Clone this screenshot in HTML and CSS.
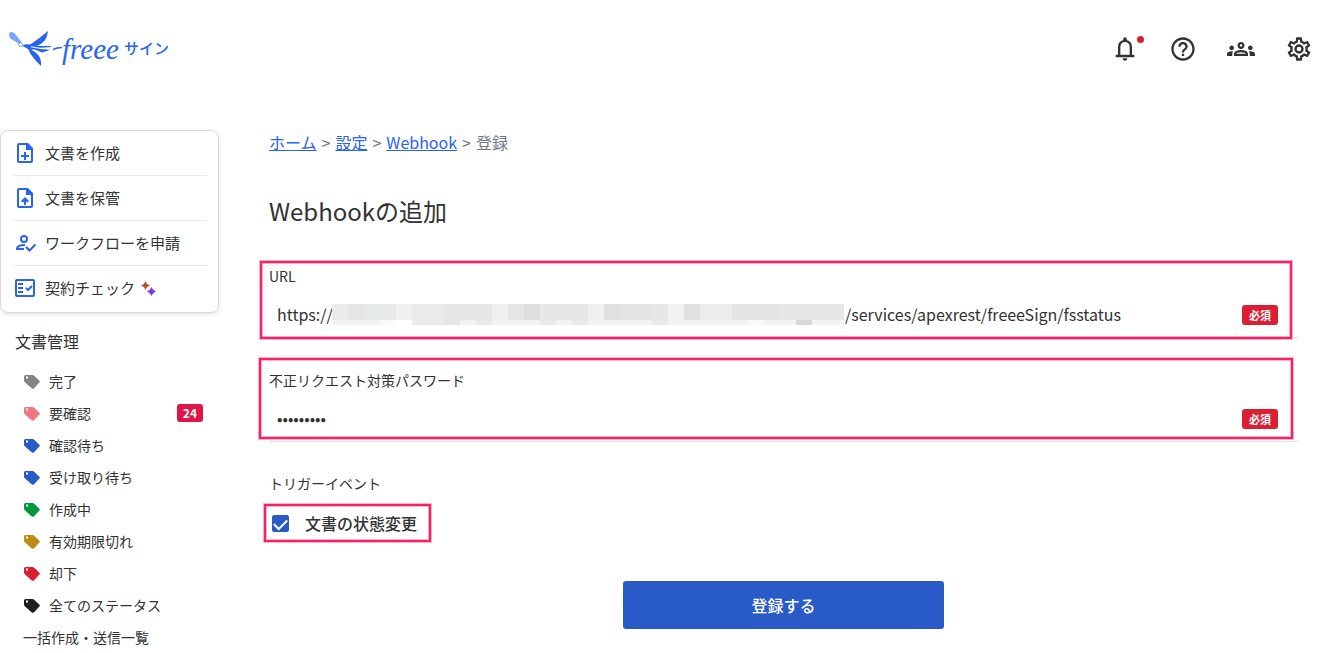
FILE: index.html
```html
<!DOCTYPE html>
<html lang="ja">
<head>
<meta charset="utf-8">
<meta name="viewport" content="width=device-width, initial-scale=1">
<title>Webhookの追加</title>
<link rel="stylesheet" href="styles.css">
</head>
<body>
<svg class="sprite" aria-hidden="true">
  <symbol id="tag" viewBox="0 0 16 14"><path fill-rule="evenodd" d="M1.500 0H8.500Q9.300 0 9.900.5L15.400 5.700Q16.300 6.600 15.400 7.600L9.800 13.400Q8.800 14.300 7.800 13.400L.8 7.200Q0 6.500 0 5.500V1.500Q0 0 1.500 0ZM2 1.500V3.500H4V1.500Z"/></symbol>
</svg>
<header class="header">
  <a class="logo" href="#" aria-label="freee サイン">
    <svg class="bird" width="54" height="36" viewBox="0 0 54 36" aria-hidden="true">
      <path fill="#78a8fb" d="M1 3.500Q1 1 3.500 1Q6 1 8 4L13.500 11L11.500 13L3 8Q1 6 1 3.500Z"/>
      <circle cx="12.500" cy="13.500" r="2" fill="none" stroke="#78a8fb"/>
      <path fill="#2864f0" d="M14 14.500Q18 12.500 22 13.500C29 9 34 5 40 0C39 8 36 12 29 15L43 15V16L30 17L42 19L34 21.500L27 18.500L23 18.500C30 22 34 27 33 35C28 30 23 25 20 18Z"/>
      <path fill="none" stroke="#fff" d="M23 15.800L36 18"/>
      <path fill="none" stroke="#2864f0" stroke-width="1.500" d="M45 18.500Q49 16.500 54 16.500"/>
    </svg>
    <span class="brand">freee</span><span class="product">サイン</span>
  </a>
  <nav class="tools" aria-label="ツール">
    <button class="tool" type="button" aria-label="お知らせ">
      <svg width="28" height="28" viewBox="0 0 24 24"><path fill="currentColor" d="M4 19v-2h2v-7q0-2.080 1.250-3.690T10.500 4.200v-.7q0-.63.440-1.060T12 2t1.060.44T13.500 3.500v.7q2 .5 3.250 2.110T18 10v7h2v2H4Zm8 3q-.83 0-1.410-.59T10 20h4q0 .82-.590 1.410T12 22Zm-4-5h8v-7q0-1.650-1.180-2.830T12 6 9.180 7.170 8 10v7Z"/></svg>
      <span class="dot"></span>
    </button>
    <button class="tool" type="button" aria-label="ヘルプ">
      <svg width="28" height="28" viewBox="0 0 24 24"><path fill="currentColor" d="M11 18h2v-2h-2v2Zm1-16C6.480 2 2 6.480 2 12s4.480 10 10 10 10-4.480 10-10S17.520 2 12 2Zm0 18c-4.410 0-8-3.590-8-8s3.590-8 8-8 8 3.590 8 8-3.590 8-8 8Zm0-14c-2.210 0-4 1.790-4 4h2c0-1.100.9-2 2-2s2 .9 2 2c0 2-3 1.750-3 5h2c0-2.250 3-2.500 3-5 0-2.210-1.790-4-4-4Z"/></svg>
    </button>
    <button class="tool" type="button" aria-label="メンバー">
      <svg width="28" height="28" viewBox="0 0 24 24"><path fill="currentColor" d="M4 13c1.100 0 2-.9 2-2s-.9-2-2-2-2 .9-2 2 .9 2 2 2Zm1.130 1.100C4.760 14.040 4.390 14 4 14c-.99 0-1.930.21-2.780.58C.48 14.900 0 15.620 0 16.430V18h4.500v-1.610c0-.83.230-1.610.630-2.290ZM20 13c1.100 0 2-.9 2-2s-.9-2-2-2-2 .9-2 2 .9 2 2 2Zm4 3.430c0-.81-.48-1.530-1.220-1.850A6.950 6.950 0 0 0 20 14c-.39 0-.76.040-1.130.1.400.68.630 1.460.630 2.290V18H24v-1.570Zm-7.760-2.780A10.500 10.500 0 0 0 12 12.750c-1.630 0-3.070.390-4.240.9A2.990 2.990 0 0 0 6 16.390V18h12v-1.610c0-1.180-.68-2.260-1.760-2.740ZM8.070 16c.09-.23.130-.39.910-.69.970-.38 1.990-.56 3.020-.56s2.050.18 3.020.56c.77.3.81.460.910.690H8.070ZM12 8c.55 0 1 .45 1 1s-.45 1-1 1-1-.45-1-1 .45-1 1-1Zm0-2c-1.660 0-3 1.340-3 3s1.340 3 3 3 3-1.340 3-3-1.340-3-3-3Z"/></svg>
    </button>
    <button class="tool" type="button" aria-label="設定">
      <svg width="28" height="28" viewBox="0 0 24 24"><path fill="currentColor" d="M19.430 12.980c.04-.32.070-.64.070-.98s-.03-.66-.07-.98l2.110-1.650c.19-.15.240-.42.120-.64l-2-3.460a.5.500 0 0 0-.61-.22l-2.490 1c-.52-.4-1.080-.73-1.690-.98l-.38-2.650A.49.490 0 0 0 14 2h-4a.49.490 0 0 0-.49.420l-.38 2.650c-.61.250-1.170.590-1.690.98l-2.490-1a.5.500 0 0 0-.61.220l-2 3.460a.49.490 0 0 0 .12.640l2.110 1.650c-.04.320-.07.650-.07.980s.03.660.07.980l-2.110 1.650a.5.500 0 0 0-.12.640l2 3.460c.12.220.390.300.610.220l2.490-1c.52.400 1.080.730 1.690.98l.38 2.650c.03.240.240.420.490.420h4c.25 0 .46-.18.490-.42l.38-2.650c.61-.25 1.170-.59 1.690-.98l2.490 1c.23.090.49 0 .61-.22l2-3.460a.5.500 0 0 0-.12-.64l-2.110-1.650Zm-1.980-1.710c.04.310.050.520.050.730s-.02.430-.05.730l-.14 1.130.89.700 1.080.84-.7 1.210-1.270-.51-1.040-.42-.9.680c-.43.320-.84.560-1.250.73l-1.060.43-.16 1.130-.2 1.350h-1.400l-.35-2.480-1.060-.43c-.43-.18-.83-.41-1.230-.71l-.91-.7-1.060.43-1.270.51-.7-1.210 1.970-1.540-.14-1.130a7 7 0 0 1 0-1.480l.14-1.130-1.970-1.540.7-1.210 2.310.93.900-.68c.43-.32.840-.56 1.250-.73l1.060-.43.360-2.480h1.390l.35 2.480 1.060.43c.43.180.83.410 1.230.71l.91.700 2.330-.94.700 1.210-1.960 1.550.14 1.130ZM12 8a4 4 0 1 0 0 8 4 4 0 0 0 0-8Zm0 6a2 2 0 1 1 0-4 2 2 0 0 1 0 4Z"/></svg>
    </button>
  </nav>
</header>

<div class="layout">
  <aside class="sidebar">
    <nav class="card" aria-label="操作">
      <a class="action" href="#">
        <svg width="24" height="24" viewBox="0 0 24 24"><path fill="currentColor" fill-rule="evenodd" d="M6 2h9l5 5v13q0 2-2 2H6q-2 0-2-2V4q0-2 2-2Zm0 2v16h12V9h-5V4ZM11 11h2v3h3v2h-3v3h-2v-3H8v-2h3Z"/></svg>
        文書を作成</a>
      <a class="action" href="#">
        <svg width="24" height="24" viewBox="0 0 24 24"><path fill="currentColor" fill-rule="evenodd" d="M6 2h9l5 5v13q0 2-2 2H6q-2 0-2-2V4q0-2 2-2Zm0 2v16h12V9h-5V4ZM12 11l4 4-1.400 1.400L13 15.500v3.500h-2v-3.500l-1.600.9L8 15Z"/></svg>
        文書を保管</a>
      <a class="action" href="#">
        <svg width="24" height="24" viewBox="0 0 24 24"><g fill="none" stroke="currentColor" stroke-width="2"><circle cx="11" cy="8" r="3"/><path d="M11 18H4q0-4 8-4M13 16l3.500 3.500 6-6"/></g></svg>
        ワークフローを申請</a>
      <a class="action" href="#">
        <svg width="24" height="24" viewBox="0 0 24 24"><g fill="none" stroke="currentColor" stroke-width="2"><rect x="3" y="4" width="18" height="16" rx="1"/><path d="M5 8h5M5 12h5M5 16h5M13 12l2 2 4-4"/></g></svg>
        契約チェック
        <svg class="spark" width="15" height="15" viewBox="0 0 15 15"><path fill="#bf4a20" d="M4.500 0L6 3L9 4.500L6 6L4.500 9L3 6L0 4.500L3 3Z"/><path fill="#7a3fe0" d="M10.500 6L12.200 8.800L15 10.500L12.200 12.200L10.500 15L8.800 12.200L6 10.500L8.800 8.800Z"/></svg></a>
    </nav>
    <h2 class="side-title">文書管理</h2>
    <nav aria-label="文書管理">
      <ul class="statuses">
        <li><a class="status" href="#"><svg class="tag gray"><use href="#tag"/></svg>完了</a></li>
        <li><a class="status" href="#"><svg class="tag pink"><use href="#tag"/></svg>要確認<span class="count">24</span></a></li>
        <li><a class="status" href="#"><svg class="tag blue"><use href="#tag"/></svg>確認待ち</a></li>
        <li><a class="status" href="#"><svg class="tag blue"><use href="#tag"/></svg>受け取り待ち</a></li>
        <li><a class="status" href="#"><svg class="tag green"><use href="#tag"/></svg>作成中</a></li>
        <li><a class="status" href="#"><svg class="tag gold"><use href="#tag"/></svg>有効期限切れ</a></li>
        <li><a class="status" href="#"><svg class="tag red"><use href="#tag"/></svg>却下</a></li>
        <li><a class="status" href="#"><svg class="tag black"><use href="#tag"/></svg>全てのステータス</a></li>
        <li><a class="status" href="#">一括作成・送信一覧</a></li>
      </ul>
    </nav>
  </aside>

  <main class="main">
    <nav class="crumbs" aria-label="パンくず"><a href="#">ホーム</a><span>&gt;</span><a href="#">設定</a><span>&gt;</span><a href="#">Webhook</a><span>&gt;</span><span>登録</span></nav>
    <h1 class="title">Webhookの追加</h1>
    <form>
      <div class="field marked">
        <label class="label" for="url">URL</label>
        <div class="control">
          <input class="input scheme" id="url" type="text" value="https://">
          <svg class="mosaic" width="512" height="21" viewBox="0 0 512 21" shape-rendering="crispEdges" aria-hidden="true">
            <path fill="#e7e7e7" d="M0 0h512v16H0z"/><path fill="#f3f3f3" d="M0 16h512v5H0z"/>
            <path fill="#edebea" d="M0 0h16v16H0z"/><path fill="#e3e5e6" d="M16 0h16v16H16z"/>
            <path fill="#e6e9e9" d="M32 0h32v16H32z"/><path fill="#f0f0f0" d="M64 0h16v16H64zM160 0h16v16h-16zM256 0h16v16h-16zM320 0h16v16h-16z"/>
            <path fill="#eaeae8" d="M80 0h32v16H80z"/><path fill="#e4e7e6" d="M112 0h16v16h-16z"/>
            <path fill="#e8e5e3" d="M176 0h16v16h-16z"/><path fill="#dcdee0" d="M192 0h16v16h-16z"/>
            <path fill="#e0e0e0" d="M272 0h16v16h-16zM352 0h16v16h-16z"/><path fill="#f2f2f1" d="M336 0h16v16h-16z"/><path fill="#ebeded" d="M368 0h32v16h-32z"/>
            <path fill="#e4e4e4" d="M288 0h32v16h-32zM400 0h48v16h-48z"/><path fill="#e7e7e7" d="M320 0h16v16h-16z"/><path fill="#e7e7e4" d="M464 0h16v16h-16z"/>
            <path fill="#fff" d="M64 16h16v5H64z"/><path fill="#fafafa" d="M48 16h16v5H48zM416 16h16v5h-16z"/>
            <path fill="#ebebeb" d="M80 16h32v5H80zM144 16h16v5h-16zM208 16h16v5h-16zM240 16h16v5h-16zM320 16h16v5h-16z"/>
            <path fill="#e6e6e6" d="M112 16h16v5h-16z"/><path fill="#d9d9d9" d="M464 16h16v5h-16z"/>
          </svg>
          <input class="input" type="text" value="/services/apexrest/freeeSign/fsstatus" aria-label="URLのパス">
          <span class="required">必須</span>
        </div>
      </div>
      <div class="field marked secret">
        <label class="label" for="password">不正リクエスト対策パスワード</label>
        <div class="control">
          <input class="input" id="password" type="password" value="password1">
          <span class="required">必須</span>
        </div>
      </div>
      <fieldset class="events">
        <legend class="label">トリガーイベント</legend>
        <label class="check marked"><input class="box" type="checkbox" checked>文書の状態変更</label>
      </fieldset>
      <button class="submit" type="submit">登録する</button>
    </form>
  </main>
</div>
</body>
</html>
```

FILE: styles.css
```css
* { box-sizing: border-box; }
body {
  margin: 0;
  background: #fff;
  color: #323232;
  font-family: "Noto Sans CJK JP", sans-serif;
  font-size: 14px;
  line-height: 20px;
}
a { color: inherit; text-decoration: none; }
h1, h2 { margin: 0; font-weight: 400; }
.sprite { display: none; }

.header {
  display: flex;
  justify-content: space-between;
  align-items: center;
  height: 98px;
  padding: 0 7px 0 8px;
}
.logo { display: flex; align-items: center; color: #2864f0; }
.bird { display: block; }
.brand { font: italic 29px/36px "Liberation Serif", serif; }
.product { margin-left: 5px; padding-bottom: 2px; font-size: 15px; font-weight: 500; }
.tools { display: flex; gap: 30px; }
.tool {
  position: relative;
  display: flex;
  padding: 0;
  border: 0;
  background: none;
  color: #323232;
}
.dot {
  position: absolute;
  top: 1px;
  right: -5px;
  width: 7px;
  height: 7px;
  border-radius: 50%;
  background: #dc1e32;
}

.layout { display: flex; padding: 32px 22px 0 0; }
.sidebar { flex: none; width: 219px; }
.card {
  padding: 0 11px 1px 12px;
  border: 1px solid #d9d9d9;
  border-radius: 8px;
  box-shadow: 0 1px 4px #0002;
}
.action {
  display: flex;
  align-items: center;
  height: 45px;
  border-bottom: 1px solid #e9e9e9;
  font-size: 15px;
}
.action:last-child { border-bottom-color: transparent; }
.action svg { flex: none; margin-right: 8px; color: #2864f0; }
.action .spark { margin: 0 0 0 6px; }
.side-title { padding: 15px 15px 11px; font-size: 16px; line-height: 26px; }
.statuses {
  margin: 0;
  padding: 0 16px 0 23px;
  list-style: none;
}
.status { display: flex; align-items: center; height: 32px; }
.tag { width: 16px; height: 14px; margin: 2px 9px 0 1px; fill: currentColor; }
.gray { color: #848484; }
.pink { color: #f07882; }
.blue { color: #285ac8; }
.green { color: #00963c; }
.gold { color: #be8c14; }
.red { color: #dc1e32; }
.black { color: #1e1e1e; }
.count {
  margin-left: auto;
  padding: 0 6px;
  border-radius: 3px;
  background: #e11446;
  color: #fff;
  font-size: 12px;
  font-weight: 700;
  line-height: 18px;
}

.main { flex: 1; min-width: 0; padding-left: 50px; }
.crumbs { display: flex; gap: 5px; color: #6e7783; font-size: 16px; line-height: 24px; }
.crumbs a { color: #2864f0; text-decoration: underline; }
.title { padding: 39px 0 36px; font-size: 24px; line-height: 36px; }
.label { display: block; padding: 0; font-size: 14px; line-height: 20px; }
.field { padding: 1px 0 6px; margin-bottom: 31px; border-bottom: 1px solid #e4e4e4; }
.control { display: flex; align-items: center; height: 34px; margin-top: 11px; padding: 0 20px 0 8px; }
.input {
  flex: 1;
  min-width: 0;
  height: 34px;
  padding: 0;
  border: 0;
  outline: 0;
  background: none;
  color: #323232;
  font: 16px/24px "Noto Sans CJK JP", sans-serif;
}
.scheme { flex: none; width: 55px; }
.mosaic { flex: none; }
.mosaic + .input { padding-left: 1px; }
.required {
  flex: none;
  margin-top: 2px;
  padding: 0 7px;
  border-radius: 3px;
  background: #dc1e32;
  color: #fff;
  font-size: 11px;
  font-weight: 700;
}
.marked { position: relative; }
.marked::after {
  content: "";
  position: absolute;
  inset: -4px 6px -2px -9px;
  border: 2px solid #fa1e64;
  box-shadow: 0 0 0 1px #fdb4cb, inset 0 0 0 1px #fdb4cb;
  pointer-events: none;
}
.secret::after { inset: -11px 5px 2px -10px; }
.events { margin: 0; padding: 0; border: 0; }
.check {
  display: inline-flex;
  align-items: center;
  gap: 16px;
  margin-top: 18px;
  padding-left: 3px;
  font-size: 16px;
  font-weight: 500;
  line-height: 24px;
}
.check::after { inset: -7px -14px -7px -5px; }
.box {
  appearance: none;
  display: grid;
  justify-items: center;
  width: 17px;
  height: 17px;
  margin: 0;
  border: 1px solid #285ac8;
  border-radius: 2px;
}
.box:checked { background: #285ac8; }
.box:checked::before {
  content: "";
  width: 11px;
  height: 6px;
  margin-top: 3px;
  border: solid #fff;
  border-width: 0 0 2px 2px;
  transform: rotate(-45deg);
}
.submit {
  display: block;
  width: 321px;
  height: 48px;
  margin: 46px auto 0;
  border: 0;
  border-radius: 3px;
  background: #285ac8;
  color: #fff;
  font: 500 16px/24px "Noto Sans CJK JP", sans-serif;
}
```
